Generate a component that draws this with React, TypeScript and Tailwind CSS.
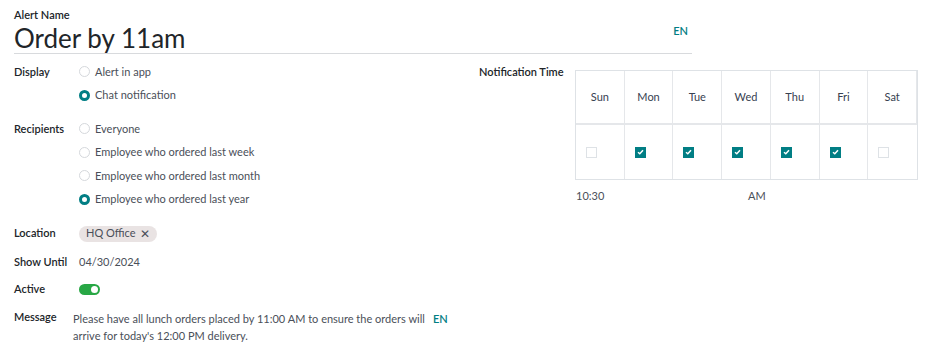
import React from "react";

const teal = "#017e84";

function Radio({ checked }: { checked?: boolean }) {
  return checked ? (
    <span className="inline-block w-[11px] h-[11px] rounded-full border-[3px] border-[#017e84] bg-white" />
  ) : (
    <span className="inline-block w-[11px] h-[11px] rounded-full border border-[#d5d8dc] bg-white" />
  );
}

function RadioRow({ label, checked }: { label: string; checked?: boolean }) {
  return (
    <div className="flex items-center gap-[5px] h-[23.5px]">
      <Radio checked={checked} />
      <span className="text-[#4a4f59]">{label}</span>
    </div>
  );
}

function Check({ checked }: { checked?: boolean }) {
  if (!checked)
    return <span className="inline-block w-[11px] h-[11px] border border-[#dee2e6] bg-white" />;
  return (
    <span className="inline-flex items-center justify-center w-[11px] h-[11px] bg-[#017e84]">
      <svg width="7" height="6" viewBox="0 0 7 6">
        <path d="M1 3.2 L2.8 4.8 L6 1.2" stroke="white" strokeWidth="1.5" fill="none" />
      </svg>
    </span>
  );
}

const days = [
  { d: "Sun", c: false },
  { d: "Mon", c: true },
  { d: "Tue", c: true },
  { d: "Wed", c: true },
  { d: "Thu", c: true },
  { d: "Fri", c: true },
  { d: "Sat", c: false },
];

export default function App() {
  return (
    <div
      className="w-[933px] h-[358px] bg-white text-[#212529] text-[11px] overflow-hidden pl-[14px] pt-[7px]"
      style={{ fontFamily: "Lato, 'Noto Sans', sans-serif" }}
    >
      {/* name */}
      <div className="relative w-[678px] border-b border-[#d8dadd]">
        <div className="font-semibold leading-[16px]">Alert Name</div>
        <div className="text-[26px] leading-[30px]">Order by 11am</div>
        <span className="absolute right-[4px] top-[16px] font-semibold" style={{ color: teal }}>
          EN
        </span>
      </div>

      <div className="flex mt-[6px]">
        {/* left column */}
        <div className="w-[465px]">
          <div className="flex">
            <div className="w-[65px] font-semibold leading-[23.5px]">Display</div>
            <div>
              <RadioRow label="Alert in app" />
              <RadioRow label="Chat notification" checked />
            </div>
          </div>
          <div className="flex mt-[10px]">
            <div className="w-[65px] font-semibold leading-[23.5px]">Recipients</div>
            <div>
              <RadioRow label="Everyone" />
              <RadioRow label="Employee who ordered last week" />
              <RadioRow label="Employee who ordered last month" />
              <RadioRow label="Employee who ordered last year" checked />
            </div>
          </div>
          <div className="flex items-center mt-[11px] h-[23px]">
            <div className="w-[65px] font-semibold">Location</div>
            <span className="inline-flex items-center gap-[4px] rounded-full bg-[#e9e3e3] text-[#4a4f59] px-[7px] h-[16px]">
              HQ Office <span className="text-[12px] leading-none">✕</span>
            </span>
          </div>
          <div className="flex items-center mt-[6px] h-[23px]">
            <div className="w-[65px] font-semibold">Show Until</div>
            <span className="text-[#4a4f59]">04/30/2024</span>
          </div>
          <div className="flex items-center mt-[4px] h-[23px]">
            <div className="w-[65px] font-semibold">Active</div>
            <span className="relative inline-block w-[21px] h-[11px] rounded-full bg-[#28a745]">
              <span className="absolute right-[2px] top-[2px] w-[7px] h-[7px] rounded-full bg-white" />
            </span>
          </div>
          <div className="flex mt-[7px]">
            <div className="w-[59px] font-semibold leading-[17px]">Message</div>
            <div className="w-[360px] text-[#4a4f59] leading-[17px] mt-[2px]">
              Please have all lunch orders placed by 11:00 AM to ensure the orders will arrive for
              today's 12:00 PM delivery.
            </div>
            <span className="font-semibold mt-[2px] leading-[17px]" style={{ color: teal }}>
              EN
            </span>
          </div>
        </div>

        {/* right column */}
        <div className="flex">
          <div className="w-[96px] font-semibold leading-[23.5px]">Notification Time</div>
          <div className="mt-[10px]">
            <div className="grid grid-cols-7 w-[343px] border border-[#dee2e6]">
              {days.map((x) => (
                <div
                  key={x.d}
                  className="h-[54px] flex items-center justify-center border-r border-b-2 border-[#e5e7ea] last:border-r-0 text-[#374151]"
                >
                  {x.d}
                </div>
              ))}
              {days.map((x) => (
                <div
                  key={x.d + "c"}
                  className="h-[54px] flex items-center pl-[10px] border-r border-[#e5e7ea] last:border-r-0"
                >
                  <Check checked={x.c} />
                </div>
              ))}
            </div>
            <div className="flex text-[#4a4f59] mt-[8px]">
              <span className="w-[173px] pl-[1px]">10:30</span>
              <span>AM</span>
            </div>
          </div>
        </div>
      </div>
    </div>
  );
}
